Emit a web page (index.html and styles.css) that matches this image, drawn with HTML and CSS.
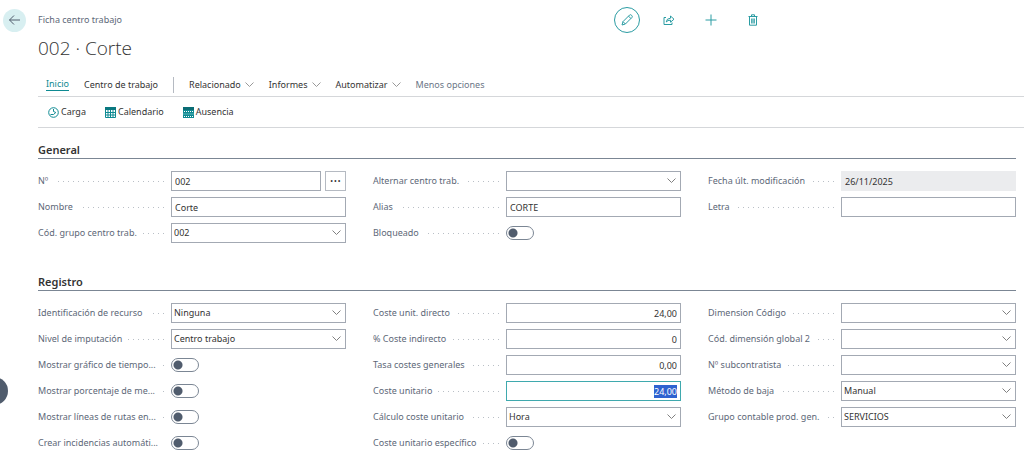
FILE: index.html
```html
<!DOCTYPE html>
<html lang="es">
<head>
<meta charset="UTF-8">
<meta name="viewport" content="width=device-width, initial-scale=1.0">
<title>Ficha centro trabajo</title>
<link rel="stylesheet" href="styles.css">
</head>
<body>
<header class="header">
  <button class="back" aria-label="Atrás">
    <svg width="13" height="12" viewBox="0 0 13 12"><path d="M12 6H1.5M6 1.5L1.5 6L6 10.5"/></svg>
  </button>
  <div class="caption">Ficha centro trabajo</div>
  <div class="actions">
    <button class="action edit" aria-label="Editar">
      <svg width="14" height="14" viewBox="0 0 14 14"><path d="M2 12L3 8.6L9.6 2Q10.6 1.2 11.6 2.3Q12.8 3.4 12 4.4L5.4 11ZM8.5 3.1L10.9 5.5M3 8.6L5.4 11"/></svg>
    </button>
    <button class="action" aria-label="Compartir">
      <svg width="12" height="12" viewBox="0 0 12 12"><path d="M3 3.5H1V10.5H9V8.5M3.2 8Q3.6 4.3 7.5 4.2V2L11 5.2L7.5 8.2V6.2Q4.8 6 3.2 8Z"/></svg>
    </button>
    <button class="action" aria-label="Nuevo">
      <svg width="12" height="12" viewBox="0 0 12 12"><path d="M6 0.5V11.5M0.5 6H11.5"/></svg>
    </button>
    <button class="action" aria-label="Eliminar">
      <svg width="12" height="12" viewBox="0 0 12 12"><path d="M1.5 2.5H10.5M4.5 2.5V0.8H7.5V2.5M2.5 2.5V11.2H9.5V2.5M4.7 4.5V9.5M6 4.5V9.5M7.3 4.5V9.5"/></svg>
    </button>
  </div>
</header>
<button class="side-handle" aria-label="Mostrar panel"></button>

<main class="page">
  <h1 class="title">002 · Corte</h1>

  <!-- Menú -->
  <nav class="tabs">
    <a class="tab active" href="#">Inicio</a>
    <a class="tab" href="#">Centro de trabajo</a>
    <span class="divider"></span>
    <button class="tab menu">Relacionado</button>
    <button class="tab menu">Informes</button>
    <button class="tab menu">Automatizar</button>
    <button class="tab muted">Menos opciones</button>
  </nav>
  <div class="commands">
    <button class="command">
      <svg width="11" height="11" viewBox="0 0 11 11"><circle cx="5.5" cy="5.5" r="4.8" fill="none" stroke="#0e8a92"/><path d="M5.5 2V4.5L7.8 5.5L5.5 7.5M2.5 7.5H5.5" fill="none" stroke="#0e8a92"/></svg>
      Carga
    </button>
    <button class="command">
      <svg width="11" height="11" viewBox="0 0 11 11"><path d="M0 0H11V3H0Z" fill="#0a7880"/><path d="M0.5 3V10.5H10.5V3M0 5.5H11M0 8H11M3 3V10.5M5.5 3V10.5M8 3V10.5" fill="none" stroke="#0e8a92"/><path d="M1 4H2V5H1ZM4 6H5V7H4ZM6 4H7V5H6ZM9 6H10V7H9ZM1 9H2V10H1Z" fill="#fff"/></svg>
      Calendario
    </button>
    <button class="command">
      <svg width="11" height="11" viewBox="0 0 11 11"><path d="M0 0H11V11H0Z" fill="#0e8a92"/><path d="M0 0H11V3H0Z" fill="#0a6c74"/><path d="M1 4.5H10M1 9.5H10" stroke="#fff" stroke-dasharray="1 1"/><path d="M0 7H11" stroke="#5cb4b9"/></svg>
      Ausencia
    </button>
  </div>

  <section class="group">
    <h2>General</h2>
    <div class="columns">
      <div class="column">
        <div class="field">
          <label for="no">Nº</label>
          <div class="control"><input id="no" type="text" value="002"><button class="assist" aria-label="Elegir Nº">···</button></div>
        </div>
        <div class="field">
          <label for="nombre">Nombre</label>
          <div class="control"><input id="nombre" type="text" value="Corte"></div>
        </div>
        <div class="field">
          <label for="grupo">Cód. grupo centro trab.</label>
          <div class="control"><select id="grupo"><option>002</option></select></div>
        </div>
      </div>
      <div class="column">
        <div class="field">
          <label for="alternar">Alternar centro trab.</label>
          <div class="control"><select id="alternar"><option></option></select></div>
        </div>
        <div class="field">
          <label for="alias">Alias</label>
          <div class="control"><input id="alias" type="text" value="CORTE"></div>
        </div>
        <div class="field">
          <label for="bloqueado">Bloqueado</label>
          <div class="control"><input id="bloqueado" class="switch" type="checkbox"></div>
        </div>
      </div>
      <div class="column">
        <div class="field">
          <label for="fecha">Fecha últ. modificación</label>
          <div class="control"><input id="fecha" type="text" value="26/11/2025" readonly></div>
        </div>
        <div class="field">
          <label for="letra">Letra</label>
          <div class="control"><input id="letra" type="text"></div>
        </div>
      </div>
    </div>
  </section>

  <section class="group">
    <h2>Registro</h2>
    <div class="columns">
      <div class="column">
        <div class="field">
          <label for="recurso">Identificación de recurso</label>
          <div class="control"><select id="recurso"><option>Ninguna</option></select></div>
        </div>
        <div class="field">
          <label for="nivel">Nivel de imputación</label>
          <div class="control"><select id="nivel"><option>Centro trabajo</option></select></div>
        </div>
        <div class="field">
          <label for="grafico">Mostrar gráfico de tiempo...</label>
          <div class="control"><input id="grafico" class="switch" type="checkbox"></div>
        </div>
        <div class="field">
          <label for="porcentaje">Mostrar porcentaje de me...</label>
          <div class="control"><input id="porcentaje" class="switch" type="checkbox"></div>
        </div>
        <div class="field">
          <label for="lineas">Mostrar líneas de rutas en...</label>
          <div class="control"><input id="lineas" class="switch" type="checkbox"></div>
        </div>
        <div class="field">
          <label for="incidencias">Crear incidencias automáti...</label>
          <div class="control"><input id="incidencias" class="switch" type="checkbox"></div>
        </div>
      </div>
      <div class="column">
        <div class="field">
          <label for="directo">Coste unit. directo</label>
          <div class="control"><input id="directo" class="number" type="text" value="24,00"></div>
        </div>
        <div class="field">
          <label for="indirecto">% Coste indirecto</label>
          <div class="control"><input id="indirecto" class="number" type="text" value="0"></div>
        </div>
        <div class="field">
          <label for="tasa">Tasa costes generales</label>
          <div class="control"><input id="tasa" class="number" type="text" value="0,00"></div>
        </div>
        <div class="field">
          <label for="unitario">Coste unitario</label>
          <div class="control"><input id="unitario" class="number" type="text" value="24,00"></div>
        </div>
        <div class="field">
          <label for="calculo">Cálculo coste unitario</label>
          <div class="control"><select id="calculo"><option>Hora</option></select></div>
        </div>
        <div class="field">
          <label for="especifico">Coste unitario específico</label>
          <div class="control"><input id="especifico" class="switch" type="checkbox"></div>
        </div>
      </div>
      <div class="column">
        <div class="field">
          <label for="dimension">Dimension Código</label>
          <div class="control"><select id="dimension"><option></option></select></div>
        </div>
        <div class="field">
          <label for="global2">Cód. dimensión global 2</label>
          <div class="control"><select id="global2"><option></option></select></div>
        </div>
        <div class="field">
          <label for="subcontratista">Nº subcontratista</label>
          <div class="control"><select id="subcontratista"><option></option></select></div>
        </div>
        <div class="field">
          <label for="baja">Método de baja</label>
          <div class="control"><select id="baja"><option>Manual</option></select></div>
        </div>
        <div class="field">
          <label for="contable">Grupo contable prod. gen.</label>
          <div class="control"><select id="contable"><option>SERVICIOS</option></select></div>
        </div>
      </div>
    </div>
  </section>
</main>
<script>
// Campo activo al abrir la ficha
const activeField = document.getElementById('unitario');
activeField.focus();
activeField.select();
</script>
</body>
</html>
```
FILE: styles.css
```css
* {
  box-sizing: border-box;
}
body {
  margin: 0;
  background: #fff;
  color: #333;
  font-family: "Noto Sans", "Open Sans", sans-serif;
  font-size: 9px;
  line-height: 12px;
}
button, input, select {
  margin: 0;
  font: inherit;
  color: inherit;
}
button {
  padding: 0;
  border: none;
  background: none;
  cursor: pointer;
}
/* Cabecera */
.header {
  display: grid;
  grid-template-columns: 38px 7fr 5fr;
  align-items: center;
  padding-top: 7px;
}
.back {
  display: flex;
  align-items: center;
  justify-content: center;
  width: 23px;
  height: 23px;
  margin-left: 3px;
  border-radius: 50%;
  background: #d8eff1;
}
.header svg {
  fill: none;
  stroke: #2b9ca3;
}
.header .back svg {
  stroke: #505c6d;
}
.caption {
  color: #5d6878;
}
.actions {
  display: flex;
  gap: 16px;
  padding-left: 1px;
}
.action {
  display: flex;
  align-items: center;
  justify-content: center;
  width: 26px;
  height: 26px;
}
.edit {
  border: 1px solid #2b9ca3;
  border-radius: 50%;
}
.page {
  padding-left: 38px;
}
.title {
  margin: 1px 0 13px;
  font-family: "Open Sans", "Noto Sans", sans-serif;
  font-size: 19px;
  font-weight: 300;
  line-height: 28px;
}
/* Menú */
.tabs {
  display: flex;
  align-items: center;
  gap: 15px;
  height: 19px;
  padding-left: 8px;
  margin-bottom: 2px;
}
.tab {
  color: #333;
  text-decoration: none;
}
.tab.active {
  color: #0e8a92;
  border-bottom: 1px solid #0e8a92;
}
.menu {
  padding-right: 13px;
  background: url("data:image/svg+xml,%3Csvg xmlns='http://www.w3.org/2000/svg' width='9' height='6'%3E%3Cpath d='M.5.5l4 4 4-4' fill='none' stroke='%23999'/%3E%3C/svg%3E") right center no-repeat;
}
.muted {
  color: #6b7686;
}
.divider {
  width: 1px;
  height: 16px;
  background: #b5bac2;
}
.commands {
  display: flex;
  align-items: center;
  gap: 19px;
  height: 32px;
  padding-left: 10px;
  border-top: 1px solid #d5d7da;
  border-bottom: 1px solid #d5d7da;
}
.command {
  display: flex;
  align-items: center;
  gap: 2px;
}
/* Grupos de campos */
.group {
  margin: 14px 8px 0 0;
}
.group + .group {
  margin-top: 31px;
}
.group h2 {
  margin: 0 0 12px;
  border-bottom: 1px solid #7b8694;
  font-size: 11px;
  font-weight: 600;
  line-height: 16px;
}
.columns {
  display: grid;
  grid-template-columns: repeat(3, 1fr);
  gap: 27px;
}
.column {
  display: flex;
  flex-direction: column;
  gap: 6px;
}
.field {
  display: grid;
  grid-template-columns: 133px 1fr;
  height: 20px;
}
.field label {
  display: flex;
  align-items: center;
  color: #5d6878;
  white-space: nowrap;
}
/* Línea de puntos entre la etiqueta y el control */
.field label::after {
  content: "";
  flex: 1;
  height: 1px;
  margin: 1px 7px 0 6px;
  background: repeating-linear-gradient(to left, #b9bfc6 0 1px, transparent 1px 5px);
}
.control {
  display: flex;
  align-items: center;
  gap: 4px;
  min-width: 0;
}
.control input[type="text"], .control select {
  flex: 1;
  min-width: 0;
  height: 20px;
  padding: 0 3px;
  border: 1px solid #a3a9b3;
  border-radius: 0;
  background: #fff;
  outline: none;
}
.control select {
  appearance: none;
  padding: 0 18px 0 2px;
  background: #fff url("data:image/svg+xml,%3Csvg xmlns='http://www.w3.org/2000/svg' width='9' height='6'%3E%3Cpath d='M.5.5l4 4 4-4' fill='none' stroke='%23808080'/%3E%3C/svg%3E") right 4px center no-repeat;
}
.control input[type="text"]:read-only {
  border-color: #ebecee;
  background: #ebecee;
}
.control input[type="text"]:focus {
  border-color: #3fa9ae;
}
.control .number {
  text-align: right;
}
.number::selection {
  background: #2f62d0;
  color: #fff;
}
.assist {
  width: 21px;
  height: 20px;
  border: 1px solid #b5bac2;
  font-size: 14px;
}
.switch {
  appearance: none;
  width: 28px;
  height: 14px;
  border: 1px solid #7b8694;
  border-radius: 7px;
  background: radial-gradient(circle at 6px 6px, #505c6d 4px, transparent 5px);
}
.switch:checked {
  background: radial-gradient(circle at 20px 6px, #505c6d 4px, transparent 5px);
}
/* Tirador del panel lateral */
.side-handle {
  position: fixed;
  top: 377px;
  left: -20px;
  width: 28px;
  height: 28px;
  border-radius: 50%;
  background: #505c6d;
}
```
